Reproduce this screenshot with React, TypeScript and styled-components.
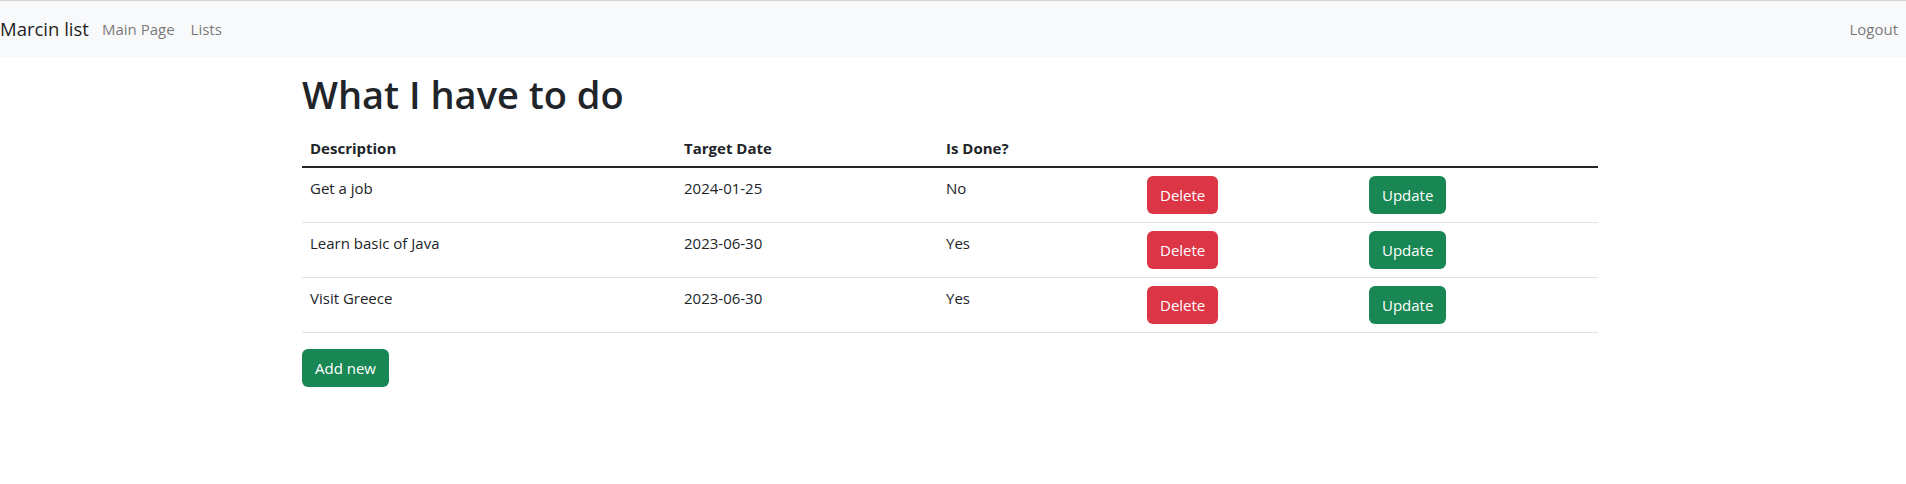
import styled, { createGlobalStyle } from "styled-components";

// 페이지 기본 스타일
const GlobalStyle = createGlobalStyle`
  html, body {
    margin: 0;
    padding: 0;
    background: #ffffff;
  }
  body {
    font-family: "Segoe UI", "Open Sans", "Noto Sans", sans-serif;
    font-size: 15px;
    line-height: 24px;
    color: #212529;
  }
  * {
    box-sizing: border-box;
  }
`;

// 상단 네비게이션 바
const NavBar = styled.nav`
  display: flex;
  align-items: center;
  justify-content: space-between;
  height: 57px;
  padding: 8px 0;
  background-color: #f8f9fa;
  border-top: 1px solid #d3d3d3;
`;

const NavLeft = styled.div`
  display: flex;
  align-items: center;
`;

const Brand = styled.a`
  font-size: 18.5px;
  line-height: 30px;
  padding: 5px 0;
  margin-right: 5px;
  color: rgba(0, 0, 0, 0.9);
  text-decoration: none;
`;

const NavLink = styled.a`
  padding: 8px;
  color: rgba(0, 0, 0, 0.55);
  text-decoration: none;
  font-size: 15px;
`;

// 본문 영역
const Container = styled.main`
  width: 1296px;
  margin: 0 0 0 302px;
  padding-top: 13px;
`;

const Title = styled.h1`
  margin: 0 0 8px 0;
  font-size: 38px;
  font-weight: 600;
  line-height: 48px;
`;

const Table = styled.table`
  width: 100%;
  border-collapse: collapse;
  table-layout: fixed;
  margin-bottom: 16px;
`;

const Th = styled.th<{ w: number }>`
  width: ${({ w }) => w}px;
  text-align: left;
  font-weight: 700;
  padding: 10px 8px 6px 8px;
  border-bottom: 2px solid #212529;
`;

const Td = styled.td`
  padding: 8px;
  vertical-align: top;
  border-bottom: 1px solid #dee2e6;
`;

const Button = styled.button<{ variant: "danger" | "success" }>`
  font-family: inherit;
  font-size: 15px;
  line-height: 24px;
  padding: 6px 12px;
  border: 1px solid transparent;
  border-radius: 6px;
  color: #ffffff;
  cursor: pointer;
  background-color: ${({ variant }) =>
    variant === "danger" ? "#dc3545" : "#198754"};
`;

type Todo = {
  id: number;
  description: string;
  targetDate: string;
  done: boolean;
};

const todos: Todo[] = [
  { id: 1, description: "Get a job", targetDate: "2024-01-25", done: false },
  { id: 2, description: "Learn basic of Java", targetDate: "2023-06-30", done: true },
  { id: 3, description: "Visit Greece", targetDate: "2023-06-30", done: true },
];

const App = () => {
  return (
    <>
      <GlobalStyle />
      <NavBar>
        <NavLeft>
          <Brand href="#">Marcin list</Brand>
          <NavLink href="#">Main Page</NavLink>
          <NavLink href="#">Lists</NavLink>
        </NavLeft>
        <NavLink href="#">Logout</NavLink>
      </NavBar>
      <Container>
        <Title>What I have to do</Title>
        <Table>
          <thead>
            <tr>
              <Th w={374}>Description</Th>
              <Th w={262}>Target Date</Th>
              <Th w={201}>Is Done?</Th>
              <Th w={222}></Th>
              <Th w={237}></Th>
            </tr>
          </thead>
          <tbody>
            {todos.map((todo) => (
              <tr key={todo.id}>
                <Td>{todo.description}</Td>
                <Td>{todo.targetDate}</Td>
                <Td>{todo.done ? "Yes" : "No"}</Td>
                <Td>
                  <Button variant="danger">Delete</Button>
                </Td>
                <Td>
                  <Button variant="success">Update</Button>
                </Td>
              </tr>
            ))}
          </tbody>
        </Table>
        <Button variant="success">Add new</Button>
      </Container>
    </>
  );
};

export default App;
